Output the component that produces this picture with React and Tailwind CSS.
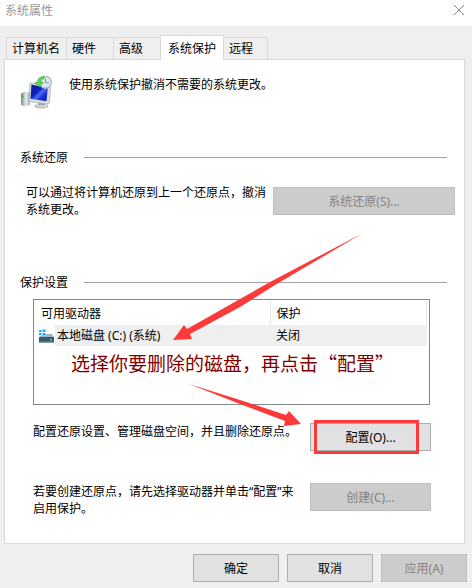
import { useState } from "react"

const tabs = [
  { id: "name", label: "计算机名", width: "w-[61px]" },
  { id: "hardware", label: "硬件", width: "w-12" },
  { id: "advanced", label: "高级", width: "w-12" },
  { id: "protection", label: "系统保护", width: "w-16" },
  { id: "remote", label: "远程", width: "w-[45px]" },
]

const drives = [{ id: "c", name: "本地磁盘 (C:) (系统)", status: "关闭" }]

const ProtectionIcon = () => (
  <svg className="h-9 w-9 shrink-0" viewBox="0 0 36 36" aria-hidden="true">
    <defs>
      <linearGradient id="screen" x1="0" y1="0" x2="1" y2="1">
        <stop offset="0" stopColor="#0a1c9c" />
        <stop offset="0.4" stopColor="#0a1fc0" />
        <stop offset="0.55" stopColor="#4a6df0" />
        <stop offset="0.7" stopColor="#1a34d8" />
        <stop offset="1" stopColor="#0c1cb0" />
      </linearGradient>
      <linearGradient id="tower" x1="0" y1="0" x2="1" y2="0">
        <stop offset="0" stopColor="#7f8587" />
        <stop offset="0.4" stopColor="#c9cdcf" />
        <stop offset="0.55" stopColor="#eceeef" />
        <stop offset="1" stopColor="#a5abad" />
      </linearGradient>
    </defs>
    {/* Tower */}
    <path d="M1 17.500l3.500-2 5.500.8v12.700l-5 1.500-4-1.500z" fill="url(#tower)" />
    <circle cx="2.600" cy="20.500" r="1.200" fill="#34c924" />
    {/* Stand */}
    <ellipse cx="21.500" cy="30" rx="7" ry="2.600" fill="#b4b8ba" />
    <ellipse cx="21.500" cy="29.300" rx="5.500" ry="1.600" fill="#e6e8e9" />
    <path d="M18 26h7v3.500h-7z" fill="#a2a7aa" />
    {/* Monitor */}
    <path d="M10 6.800l19.500 3 1 2-1 15-1.500 1.200L9 25.500z" fill="#dadee0" stroke="#a3a9ad" strokeWidth="0.7" />
    <path d="M11.500 8.600l16.300 3.400-1.300 13.300-16-2.600z" fill="url(#screen)" />
    {/* Clock with restore arrow */}
    <circle cx="25.500" cy="6.300" r="5.900" fill="#dde7ed" stroke="#a9b7c1" strokeWidth="1.300" />
    <path d="M25.500 2.500v4.300h3.500" fill="none" stroke="#7d94a8" strokeWidth="1" />
    <path d="M24 .8c-4-.6-6.600 2-6.500 5.700h-2.700l4.400 4.300 4-4.300h-2.600c0-2.200 1-3.500 3.400-3.700z" fill="#5fd852" stroke="#2fa52b" strokeWidth="0.600" />
  </svg>
)

const DriveIcon = () => (
  <svg className="block h-4 w-4" viewBox="0 0 16 16" aria-hidden="true">
    <path d="M3 6h10l2 3.500H0z" fill="#9fb4c1" />
    <path d="M0 9h15v5.500H0z" fill="#3c5a6e" />
    <path d="M0 13.500h15v1H0z" fill="#6f8797" />
    <path d="M11 11h2v1.500h-2z" fill="#3fd27a" />
    <path d="M0 1h7v6.500H0z" fill="#ffffff" />
    <path d="M0 2h2.500v2H0zM3.500 1.500H6.500V4h-3zM0 5h2.500v2H0zM3.500 5H6.500v2.500h-3z" fill="#12aef0" />
  </svg>
)

const DialogButton = ({ className, ...props }) => (
  <button
    type="button"
    className={`h-7 border border-[#adadad] bg-[#e1e1e1] text-center disabled:border-[#bfbfbf] disabled:bg-[#cccccc] disabled:text-[#838383] ${className}`}
    {...props}
  />
)

const SectionTitle = ({ children }) => (
  <div className="mr-2 flex items-center gap-4">
    <h2>{children}</h2>
    <div className="h-px flex-1 bg-[#a0a0a0]" />
  </div>
)

const App = () => {
  const [activeTab, setActiveTab] = useState("protection")

  return (
    <div className="min-h-screen bg-[#efefef] font-['Noto_Sans','Noto_Sans_CJK_SC',sans-serif] text-[12px] leading-[17px] text-black">
      {/* Title bar */}
      <header className="flex h-[26px] items-start justify-between bg-white pl-[5px] pr-[7px] pt-[2px] text-[#999999]">
        <h1>系统属性</h1>
        <button type="button" aria-label="关闭" className="mt-[2px]">
          <svg className="block h-3 w-3" viewBox="0 0 12 12" fill="none" stroke="#8c8c8c">
            <path d="M1 1l10 10M11 1L1 11" />
          </svg>
        </button>
      </header>

      <main className="pb-[6px] pl-1 pr-[5px] pt-[9px]">
        {/* Tabs */}
        <div role="tablist" className="flex items-end pl-[2px]">
          {tabs.map((tab) => (
            <button
              key={tab.id}
              type="button"
              role="tab"
              aria-selected={activeTab === tab.id}
              onClick={() => setActiveTab(tab.id)}
              className={`-mr-px border border-b-0 border-[#d9d9d9] text-left ${tab.width} ${
                activeTab === tab.id ? "relative z-10 -mb-px h-[25px] bg-white pl-[7px]" : "h-[22px] pl-[5px]"
              }`}
            >
              {tab.label}
            </button>
          ))}
        </div>

        <section role="tabpanel" className="mr-[2px] border border-[#d9d9d9] bg-white pb-[26px] pl-[15px] pr-[9px] pt-4">
          <div className="flex items-start gap-[13px]">
            <ProtectionIcon />
            <p>使用系统保护撤消不需要的系统更改。</p>
          </div>

          <div className="mt-[37px]">
            <SectionTitle>系统还原</SectionTitle>
            <div className="mt-[18px] flex items-start justify-between pl-[6px]">
              <p className="w-[241px]">可以通过将计算机还原到上一个还原点，撤消系统更改。</p>
              <DialogButton disabled className="mt-[3px] w-[182px]">
                系统还原(S)...
              </DialogButton>
            </div>
          </div>

          <div className="relative mt-14">
            <SectionTitle>保护设置</SectionTitle>
            <div className="ml-[13px] mr-6">
              <div className="relative mr-px mt-2 h-[106px] border border-[#828790] pr-[2px] pt-px">
                <table className="w-full table-fixed border-collapse text-left">
                  <colgroup>
                    <col className="w-[21px]" />
                    <col className="w-[215px]" />
                    <col />
                  </colgroup>
                  <thead>
                    <tr className="h-6">
                      <th colSpan={2} className="border-r border-[#e5e5e5] pl-[7px] font-normal">
                        可用驱动器
                      </th>
                      <th className="border-r border-[#e5e5e5] pl-[6px] font-normal">保护</th>
                    </tr>
                  </thead>
                  <tbody>
                    {drives.map((drive) => (
                      <tr key={drive.id} className="h-[21px]">
                        <td className="p-0 pl-[5px]">
                          <DriveIcon />
                        </td>
                        <td className="bg-[#efefef] pl-[2px]">{drive.name}</td>
                        <td className="bg-[#efefef] pl-[6px]">{drive.status}</td>
                      </tr>
                    ))}
                  </tbody>
                </table>
                <p className="absolute left-[37px] top-[50px] whitespace-nowrap font-['Noto_Sans_CJK_SC',sans-serif] text-[19px] leading-[26px] text-[#800000]">
                  选择你要删除的磁盘，再点击“配置”
                </p>
              </div>

              <div className="mt-[18px] flex items-start justify-between">
                <p className="w-[265px]">配置还原设置、管理磁盘空间，并且删除还原点。</p>
                <div className="relative">
                  <DialogButton className="block w-[121px]">配置(O)...</DialogButton>
                  <div className="pointer-events-none absolute -bottom-[3px] -top-[3px] left-1 right-3 border-3 border-[#fd3a3a]" />
                </div>
              </div>

              <div className="mt-8 flex items-start justify-between">
                <p className="w-[265px]">若要创建还原点，请先选择驱动器并单击“配置”来启用保护。</p>
                <DialogButton disabled className="w-[121px]">
                  创建(C)...
                </DialogButton>
              </div>
            </div>

            {/* Arrows pointing at the drive and the configure button */}
            <svg
              className="pointer-events-none absolute -top-10 left-[153px] h-[196px] w-[192px]"
              viewBox="173 234 192 196"
              fill="#fd3a3a"
              aria-hidden="true"
            >
              <path d="M363 233L270 282 240 299 187 329 184 325 173 340 192 339 190 334 240 307 275 285z" />
              <path d="M189 384L240 400 286 415 289 411 301 424 284 426 285 421 240 404z" />
            </svg>
          </div>
        </section>

        {/* Footer buttons */}
        <footer className="mt-[10px] flex justify-end gap-2">
          <DialogButton className="w-[86px]">确定</DialogButton>
          <DialogButton className="w-[86px]">取消</DialogButton>
          <DialogButton disabled className="w-[86px]">
            应用(A)
          </DialogButton>
        </footer>
      </main>
    </div>
  )
}

export default App
